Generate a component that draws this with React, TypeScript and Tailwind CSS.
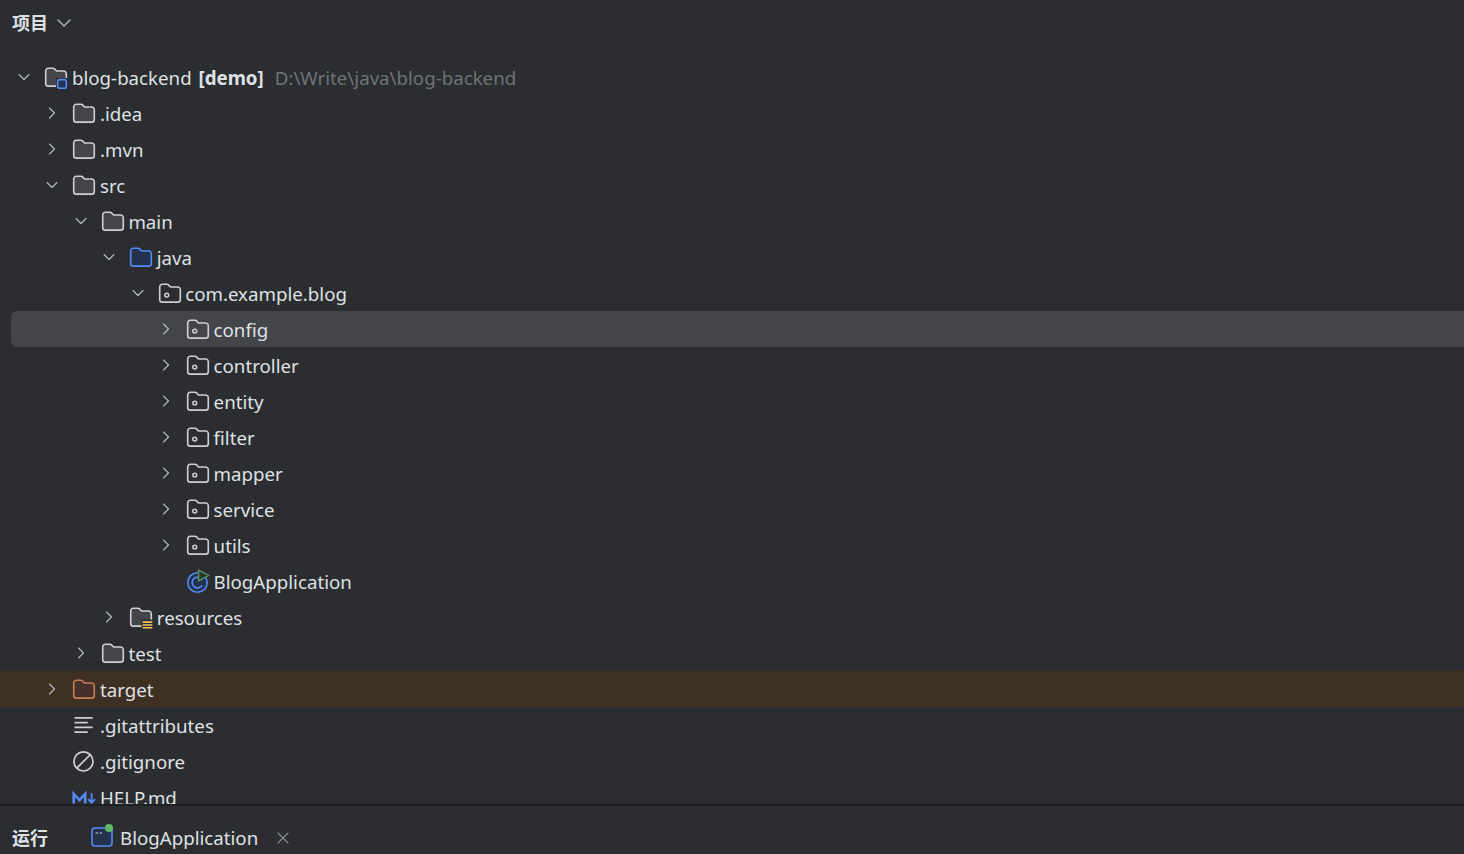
import { ChevronDown, ChevronRight, X } from 'lucide-react'

type IconKind = 'folder' | 'source' | 'pkg' | 'resources' | 'excluded' | 'spring' | 'lines' | 'ignore' | 'md'

interface Row {
  depth: number
  label: string
  icon: IconKind
  open?: boolean
  leaf?: boolean
  tone?: 'selected' | 'target'
}

const ROWS: Row[] = [
  { depth: 1, label: '.idea', icon: 'folder' },
  { depth: 1, label: '.mvn', icon: 'folder' },
  { depth: 1, label: 'src', icon: 'folder', open: true },
  { depth: 2, label: 'main', icon: 'folder', open: true },
  { depth: 3, label: 'java', icon: 'source', open: true },
  { depth: 4, label: 'com.example.blog', icon: 'pkg', open: true },
  { depth: 5, label: 'config', icon: 'pkg', tone: 'selected' },
  { depth: 5, label: 'controller', icon: 'pkg' },
  { depth: 5, label: 'entity', icon: 'pkg' },
  { depth: 5, label: 'filter', icon: 'pkg' },
  { depth: 5, label: 'mapper', icon: 'pkg' },
  { depth: 5, label: 'service', icon: 'pkg' },
  { depth: 5, label: 'utils', icon: 'pkg' },
  { depth: 5, label: 'BlogApplication', icon: 'spring', leaf: true },
  { depth: 3, label: 'resources', icon: 'resources' },
  { depth: 2, label: 'test', icon: 'folder' },
  { depth: 1, label: 'target', icon: 'excluded', tone: 'target' },
  { depth: 1, label: '.gitattributes', icon: 'lines', leaf: true },
  { depth: 1, label: '.gitignore', icon: 'ignore', leaf: true },
  { depth: 1, label: 'HELP.md', icon: 'md', leaf: true },
]

const FOLDER = 'M2.5 5.5a2.5 2.5 0 0 1 2.5-2.5h4.2a2 2 0 0 1 1.4.6l1.9 1.9h6.5a2.5 2.5 0 0 1 2.5 2.5v9a2.5 2.5 0 0 1-2.5 2.5H5a2.5 2.5 0 0 1-2.5-2.5z'

function TreeIcon({ kind }: { kind: IconKind }) {
  if (kind === 'spring') {
    return (
      <svg width="26" height="26" viewBox="0 0 24 24" fill="none">
        <circle cx="11.500" cy="12.500" r="9" stroke="#548af7" strokeWidth="1.500" fill="#25324d" />
        <path d="M15.800 9.700a5 5 0 1 0 0 5.600" stroke="#548af7" strokeWidth="1.500" />
        <path d="M12.500 1l9.500 5-9.500 5z" fill="#2b3a2e" stroke="#57965c" strokeWidth="1.300" strokeLinejoin="round" />
      </svg>
    )
  }
  if (kind === 'lines') {
    return (
      <svg width="26" height="26" viewBox="0 0 24 24" fill="none" stroke="#ced0d6" strokeWidth="1.500">
        <path d="M3.200 4.500h16.800M3.200 8.900h12.200M3.200 13.300h16.800M3.200 17.700h12.200" />
      </svg>
    )
  }
  if (kind === 'ignore') {
    return (
      <svg width="26" height="26" viewBox="0 0 24 24" fill="none" stroke="#ced0d6" strokeWidth="1.600">
        <circle cx="11.500" cy="11.500" r="8.800" />
        <path d="M5.300 17.700l12.400-12.400" />
      </svg>
    )
  }
  if (kind === 'md') {
    return (
      <svg width="26" height="26" viewBox="0 0 24 24" fill="none" stroke="#548af7" strokeWidth="2.400">
        <path d="M2.500 17V8.200L7.800 14l5.300-5.800V17" />
        <path d="M19 7.500v9M15.800 13l3.200 3.500 3.200-3.500" strokeWidth="1.700" />
      </svg>
    )
  }

  const stroke = kind === 'source' ? '#548af7' : kind === 'excluded' ? '#c77d55' : '#ced0d6'
  const fill = kind === 'source' ? '#25324d' : kind === 'excluded' ? '#45322b' : '#43454a'

  return (
    <svg width="26" height="26" viewBox="0 0 24 24" fill="none">
      <path d={FOLDER} fill={kind === 'pkg' ? 'transparent' : fill} stroke={stroke} strokeWidth="1.500" />
      {kind === 'pkg' && <circle cx="9" cy="13" r="1.800" stroke={stroke} strokeWidth="1.400" />}
      {kind === 'resources' && (
        <>
          <rect x="12.500" y="13.500" width="11" height="9" fill="#2b2d30" />
          <path d="M13.500 15.800h9M13.500 18.400h9M13.500 21h9" stroke="#f2c55c" strokeWidth="1.400" />
        </>
      )}
    </svg>
  )
}

function TreeRow({ row }: { row: Row }) {
  const toneClass =
    row.tone === 'selected'
      ? 'ml-[11px] rounded-l-md bg-[#43454a]'
      : row.tone === 'target'
        ? 'bg-[#3f3024]'
        : ''

  return (
    <div className={`flex h-9 shrink-0 items-center ${toneClass}`}>
      <div
        className="flex items-center"
        style={{ paddingLeft: row.depth * 28.4 + 14 - (row.tone === 'selected' ? 11 : 0) }}
      >
        <span className="flex w-5 items-center justify-center text-[#b4b8bf]">
          {!row.leaf &&
            (row.open ? <ChevronDown size={24} strokeWidth={1.4} /> : <ChevronRight size={24} strokeWidth={1.4} />)}
        </span>
        <span className="ml-[9px] flex w-[28.6px] items-center pt-[2px]">
          <TreeIcon kind={row.icon} />
        </span>
        <span className="pt-[3px] text-[18.7px] leading-none text-[#dfe1e5]">{row.label}</span>
      </div>
    </div>
  )
}

export default function App() {
  return (
    <div className="flex h-screen flex-col overflow-hidden bg-[#2b2d30] font-['Noto_Sans','Noto_Sans_CJK_SC',sans-serif]">
      <div className="flex h-[59px] shrink-0 items-start pl-3 pt-[10px] text-[#dfe1e5]">
        <span className="text-[18px] font-bold leading-[26px]">项目</span>
        <ChevronDown size={24} strokeWidth={1.4} className="ml-1 mt-px text-[#b4b8bf]" />
      </div>

      <div className="flex min-h-0 flex-1 flex-col overflow-hidden">
        <div className="flex h-9 shrink-0 items-center pl-[14px]">
          <span className="flex w-5 items-center justify-center text-[#b4b8bf]">
            <ChevronDown size={24} strokeWidth={1.4} />
          </span>
          <span className="ml-[9px] flex w-[29px] items-center pt-[2px]">
            <svg width="26" height="26" viewBox="0 0 24 24" fill="none">
              <path d={FOLDER} fill="#43454a" stroke="#ced0d6" strokeWidth="1.500" />
              <rect x="12" y="12" width="11" height="11" fill="#2b2d30" />
              <rect x="13.500" y="13.500" width="8" height="8" rx="2" fill="#25324d" stroke="#548af7" strokeWidth="1.500" />
            </svg>
          </span>
          <span className="pt-[3px] text-[18.7px] leading-none text-[#dfe1e5]">
            blog-backend <b className="ml-[2px] font-bold">[demo]</b>
          </span>
          <span className="ml-[11px] pt-[3px] text-[18.7px] leading-none text-[#6f737a]">D:\Write\java\blog-backend</span>
        </div>
        {ROWS.map((row) => (
          <TreeRow key={row.label + row.depth} row={row} />
        ))}
      </div>

      <div className="flex h-[50px] shrink-0 items-center border-t-2 border-[#1e1f22] pl-3 pt-4">
        <span className="text-[18px] font-bold leading-none text-[#dfe1e5]">运行</span>
        <span className="relative ml-[42px] flex h-6 w-[24px] items-center">
          <svg width="24" height="24" viewBox="0 0 24 24" fill="none">
            <rect x="2" y="2" width="20" height="18" rx="3" fill="#25324d" stroke="#548af7" strokeWidth="1.600" />
            <path d="M5.500 7h2.500M9.500 7h2.500" stroke="#ced0d6" strokeWidth="1.200" />
          </svg>
          <span className="absolute left-[15px] top-[-2px] h-2 w-2 rounded-full bg-[#5fb865]" />
        </span>
        <span className="ml-[6px] text-[18.7px] leading-none text-[#dfe1e5]">BlogApplication</span>
        <X size={20} strokeWidth={1.4} className="ml-[15px] text-[#868a91]" />
      </div>
    </div>
  )
}
